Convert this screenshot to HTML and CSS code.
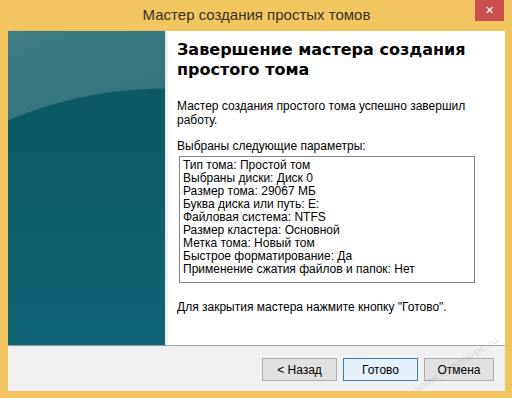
FILE: index.html
```html
<!DOCTYPE html>
<html lang="ru">
<head>
<meta charset="UTF-8" />
<title>Мастер создания простых томов</title>
<link rel="stylesheet" href="styles.css">
</head>
<body>
  <div class="window" role="dialog" aria-label="Мастер создания простых томов">
    <div class="titlebar">
      <span class="title">Мастер создания простых томов</span>
      <button type="button" class="close" aria-label="Закрыть">&#x2715;</button>
    </div>
    <div class="client">
      <div class="main">
        <div class="side"></div>
        <div class="content">
          <h1 class="heading">Завершение мастера создания простого тома</h1>
          <p class="text">Мастер создания простого тома успешно завершил работу.</p>
          <p class="label">Выбраны следующие параметры:</p>
          <div class="summary">
            <div>Тип тома: Простой том</div>
            <div>Выбраны диски: Диск 0</div>
            <div>Размер тома: 29067 МБ</div>
            <div>Буква диска или путь: E:</div>
            <div>Файловая система: NTFS</div>
            <div>Размер кластера: Основной</div>
            <div>Метка тома: Новый том</div>
            <div>Быстрое форматирование: Да</div>
            <div>Применение сжатия файлов и папок: Нет</div>
          </div>
          <p class="hint">Для закрытия мастера нажмите кнопку "Готово".</p>
        </div>
      </div>
      <div class="footer">
        <button type="button" class="btn">&lt; Назад</button>
        <button type="button" class="btn default">Готово</button>
        <button type="button" class="btn cancel">Отмена</button>
      </div>
    </div>
    <span class="watermark">www.remont-pc.ru</span>
  </div>
</body>
</html>
```

FILE: styles.css
```css
* {
  box-sizing: border-box;
}
body {
  margin: 0;
  background: #f2c561;
  font-family: 'Liberation Sans', Arial, sans-serif;
  font-size: 12px;
  color: #000;
}
.window {
  position: relative;
  width: 512px;
  height: 398px;
  background: #f2c561;
  padding: 0 7px 7px 8px;
  display: flex;
  flex-direction: column;
  overflow: hidden;
}
.titlebar {
  height: 31px;
  display: flex;
  align-items: center;
  justify-content: center;
  position: relative;
}
.title {
  font-size: 15px;
  color: #3a3226;
  margin-top: -2px;
}
.close {
  position: absolute;
  top: 0;
  right: 1px;
  width: 29px;
  height: 21px;
  border: none;
  background: #c9504f;
  color: #fff;
  font-size: 11px;
  font-weight: bold;
  padding: 0;
  font-family: 'DejaVu Sans', sans-serif;
}
.client {
  flex: 1;
  display: flex;
  flex-direction: column;
  background: #f0f0f0;
}
.main {
  height: 315px;
  display: flex;
  background: #fff;
  border-bottom: 1px solid #a0a0a0;
}
.side {
  width: 157px;
  background:
    radial-gradient(ellipse 340px 280px at 157px 337px, #0c5b64 99.5%, transparent 100%),
    linear-gradient(160deg, #3d7d83 0%, #2b6d74 60%, #1f636c 100%);
  box-shadow: 2px 0 3px rgba(0, 0, 0, 0.12);
  position: relative;
}
.side::after {
  content: "";
  position: absolute;
  left: 0;
  right: 0;
  bottom: 0;
  height: 200px;
  background: linear-gradient(180deg, rgba(16, 100, 118, 0) 0%, rgba(16, 102, 120, 0.9) 100%);
}
.content {
  flex: 1;
  padding: 9px 12px 0 12px;
}
.heading {
  margin: 0;
  font-family: 'DejaVu Sans', Verdana, sans-serif;
  font-weight: bold;
  font-size: 16px;
  line-height: 20px;
  width: 300px;
}
.text {
  margin: 19px 0 0;
  line-height: 14px;
  width: 290px;
}
.label {
  margin: 12px 0 0;
  line-height: 14px;
}
.summary {
  margin: 3px 0 0 2px;
  width: 296px;
  height: 127px;
  border: 1px solid #838383;
  padding: 2px 3px;
  line-height: 13px;
}
.hint {
  margin: 17px 0 0;
  line-height: 14px;
}
.footer {
  flex: 1;
  display: flex;
  justify-content: flex-end;
  align-items: flex-start;
  gap: 6px;
  padding: 12px 11px 0 0;
}
.btn {
  width: 75px;
  height: 23px;
  border: 1px solid #adadad;
  background: #e1e1e1;
  font-family: 'Liberation Sans', Arial, sans-serif;
  font-size: 12px;
  color: #000;
  padding: 0;
}
.btn.default {
  border-color: #3c7fb1;
  background: #e5f1fb;
}
.btn.cancel {
  width: 70px;
}
.watermark {
  position: absolute;
  left: 408px;
  top: 358px;
  white-space: nowrap;
  transform: rotate(-32deg);
  color: rgba(120, 120, 120, 0.16);
  font-size: 11px;
  font-weight: bold;
  pointer-events: none;
}
```
